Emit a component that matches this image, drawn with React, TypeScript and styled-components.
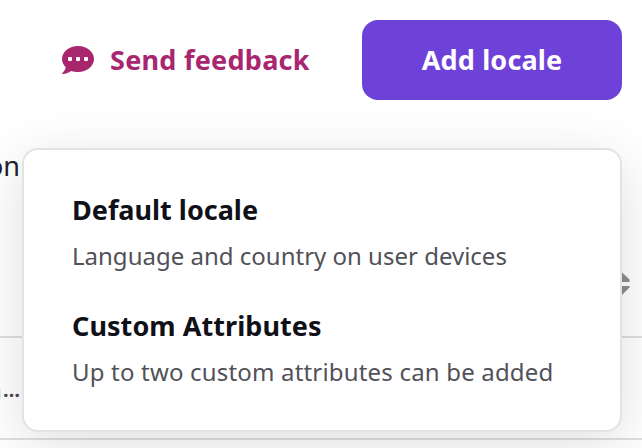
import React from "react";
import styled, { createGlobalStyle } from "styled-components";

const GlobalStyle = createGlobalStyle`
  * { box-sizing: border-box; }
  body { margin: 0; background: #fff; overflow: hidden; }
`;

const Page = styled.main`
  position: relative;
  width: 642px;
  height: 448px;
  overflow: hidden;
  background: #fff;
  color: #22222c;
  font-family: "Noto Sans", sans-serif;
`;

const Toolbar = styled.header`
  display: flex;
  align-items: center;
  justify-content: space-between;
  height: 100px;
  padding: 20px 20px 0 62px;
`;

const FeedbackButton = styled.button`
  display: flex;
  align-items: center;
  gap: 16px;
  height: 80px;
  padding: 0;
  border: 0;
  background: none;
  color: #a8266e;
  font: 700 27px/36px "Noto Sans", sans-serif;
`;

const AddButton = styled.button`
  width: 260px;
  height: 80px;
  padding: 0;
  border: 0;
  border-radius: 16px;
  background: #6e41d9;
  color: #fff;
  font: 700 27px/36px "Noto Sans", sans-serif;
`;

const Label = styled.span<{ $tracking: number }>`
  display: inline-block;
  white-space: nowrap;
  letter-spacing: ${(p) => p.$tracking}px;
`;

const Table = styled.section`
  display: flex;
  flex-direction: column;
`;

const HeaderRow = styled.div`
  display: flex;
  justify-content: space-between;
  align-items: flex-start;
  height: 238px;
  padding: 48px 12px 0 0;
  border-bottom: 2px solid #dfdfdf;
  font-size: 27px;
  line-height: 36px;
`;

const EndClip = styled.div<{ $width: number }>`
  display: flex;
  justify-content: flex-end;
  width: ${(p) => p.$width}px;
  overflow: hidden;
  white-space: nowrap;
`;

const SortIcon = styled.svg`
  display: block;
  margin-top: 122px;
`;

const BodyRow = styled.div`
  height: 102px;
  padding-top: 35px;
  border-bottom: 2px solid #dfdfdf;
  color: #4b4b53;
  font-size: 24px;
  line-height: 34px;
`;

const Ellipsis = styled.span`
  margin-left: 1px;
  font-size: 20px;
  font-weight: 700;
`;

const Menu = styled.div`
  position: absolute;
  top: 148px;
  left: 22px;
  display: flex;
  flex-direction: column;
  gap: 34px;
  width: 600px;
  height: 284px;
  padding: 42px 48px;
  border: 2px solid #e3e3e4;
  border-radius: 16px;
  background: #fff;
  box-shadow: 0 12px 56px rgba(0, 0, 0, 0.13);
`;

const MenuItem = styled.div`
  display: flex;
  flex-direction: column;
  flex: none;
  align-items: flex-start;
  gap: 11px;
  height: 82px;
`;

const ItemTitle = styled.div`
  color: #101018;
  font-size: 27px;
  font-weight: 700;
  line-height: 36px;
`;

const ItemText = styled.div`
  color: #515158;
  font-size: 24px;
  line-height: 34px;
`;

const items = [
  { title: "Default locale", titleTracking: 0, text: "Language and country on user devices", textTracking: 0 },
  { title: "Custom Attributes", titleTracking: 0.06, text: "Up to two custom attributes can be added", textTracking: 0.18 },
];

export default function App() {
  return (
    <Page>
      <GlobalStyle />
      <Toolbar>
        <FeedbackButton>
          <svg width="32" height="28" viewBox="0 0 32 28">
            <path
              fill="#a8266e"
              d="M16 0C7.200 0 0 5.800 0 13C0 16.200 1.500 19 3.800 21.200C3.200 23.700 1.900 25.600.3 27.100C-.1 27.500.1 28 .6 28C4.100 27.900 7 26.600 9 25C11.200 25.700 13.500 26 16 26C24.800 26 32 20.200 32 13S24.800 0 16 0Z"
            />
            <g fill="#fff">
              <rect x="6" y="11" width="4" height="4" rx="1" />
              <rect x="14" y="11" width="4" height="4" rx="1" />
              <rect x="22" y="11" width="4" height="4" rx="1" />
            </g>
          </svg>
          <Label $tracking={0.27}>Send feedback</Label>
        </FeedbackButton>
        <AddButton>
          <Label $tracking={0.15}>Add locale</Label>
        </AddButton>
      </Toolbar>
      <Table>
        <HeaderRow>
          <EndClip $width={20}>on</EndClip>
          <SortIcon width="20" height="28" viewBox="0 0 20 28" fill="#8d8d91">
            <path d="M10 .5L19.500 9.500Q20.500 12 18.500 12H1.500Q-.5 12 .5 9.500Z" />
            <path d="M10 27L19.500 17.500Q20.500 16 18.500 16H1.500Q-.5 16 .5 17.500Z" />
          </SortIcon>
        </HeaderRow>
        <BodyRow>
          <EndClip $width={20}>
            n<Ellipsis>…</Ellipsis>
          </EndClip>
        </BodyRow>
      </Table>
      <Menu role="menu">
        {items.map((item) => (
          <MenuItem key={item.title} role="menuitem">
            <ItemTitle>
              <Label $tracking={item.titleTracking}>{item.title}</Label>
            </ItemTitle>
            <ItemText>
              <Label $tracking={item.textTracking}>{item.text}</Label>
            </ItemText>
          </MenuItem>
        ))}
      </Menu>
    </Page>
  );
}
